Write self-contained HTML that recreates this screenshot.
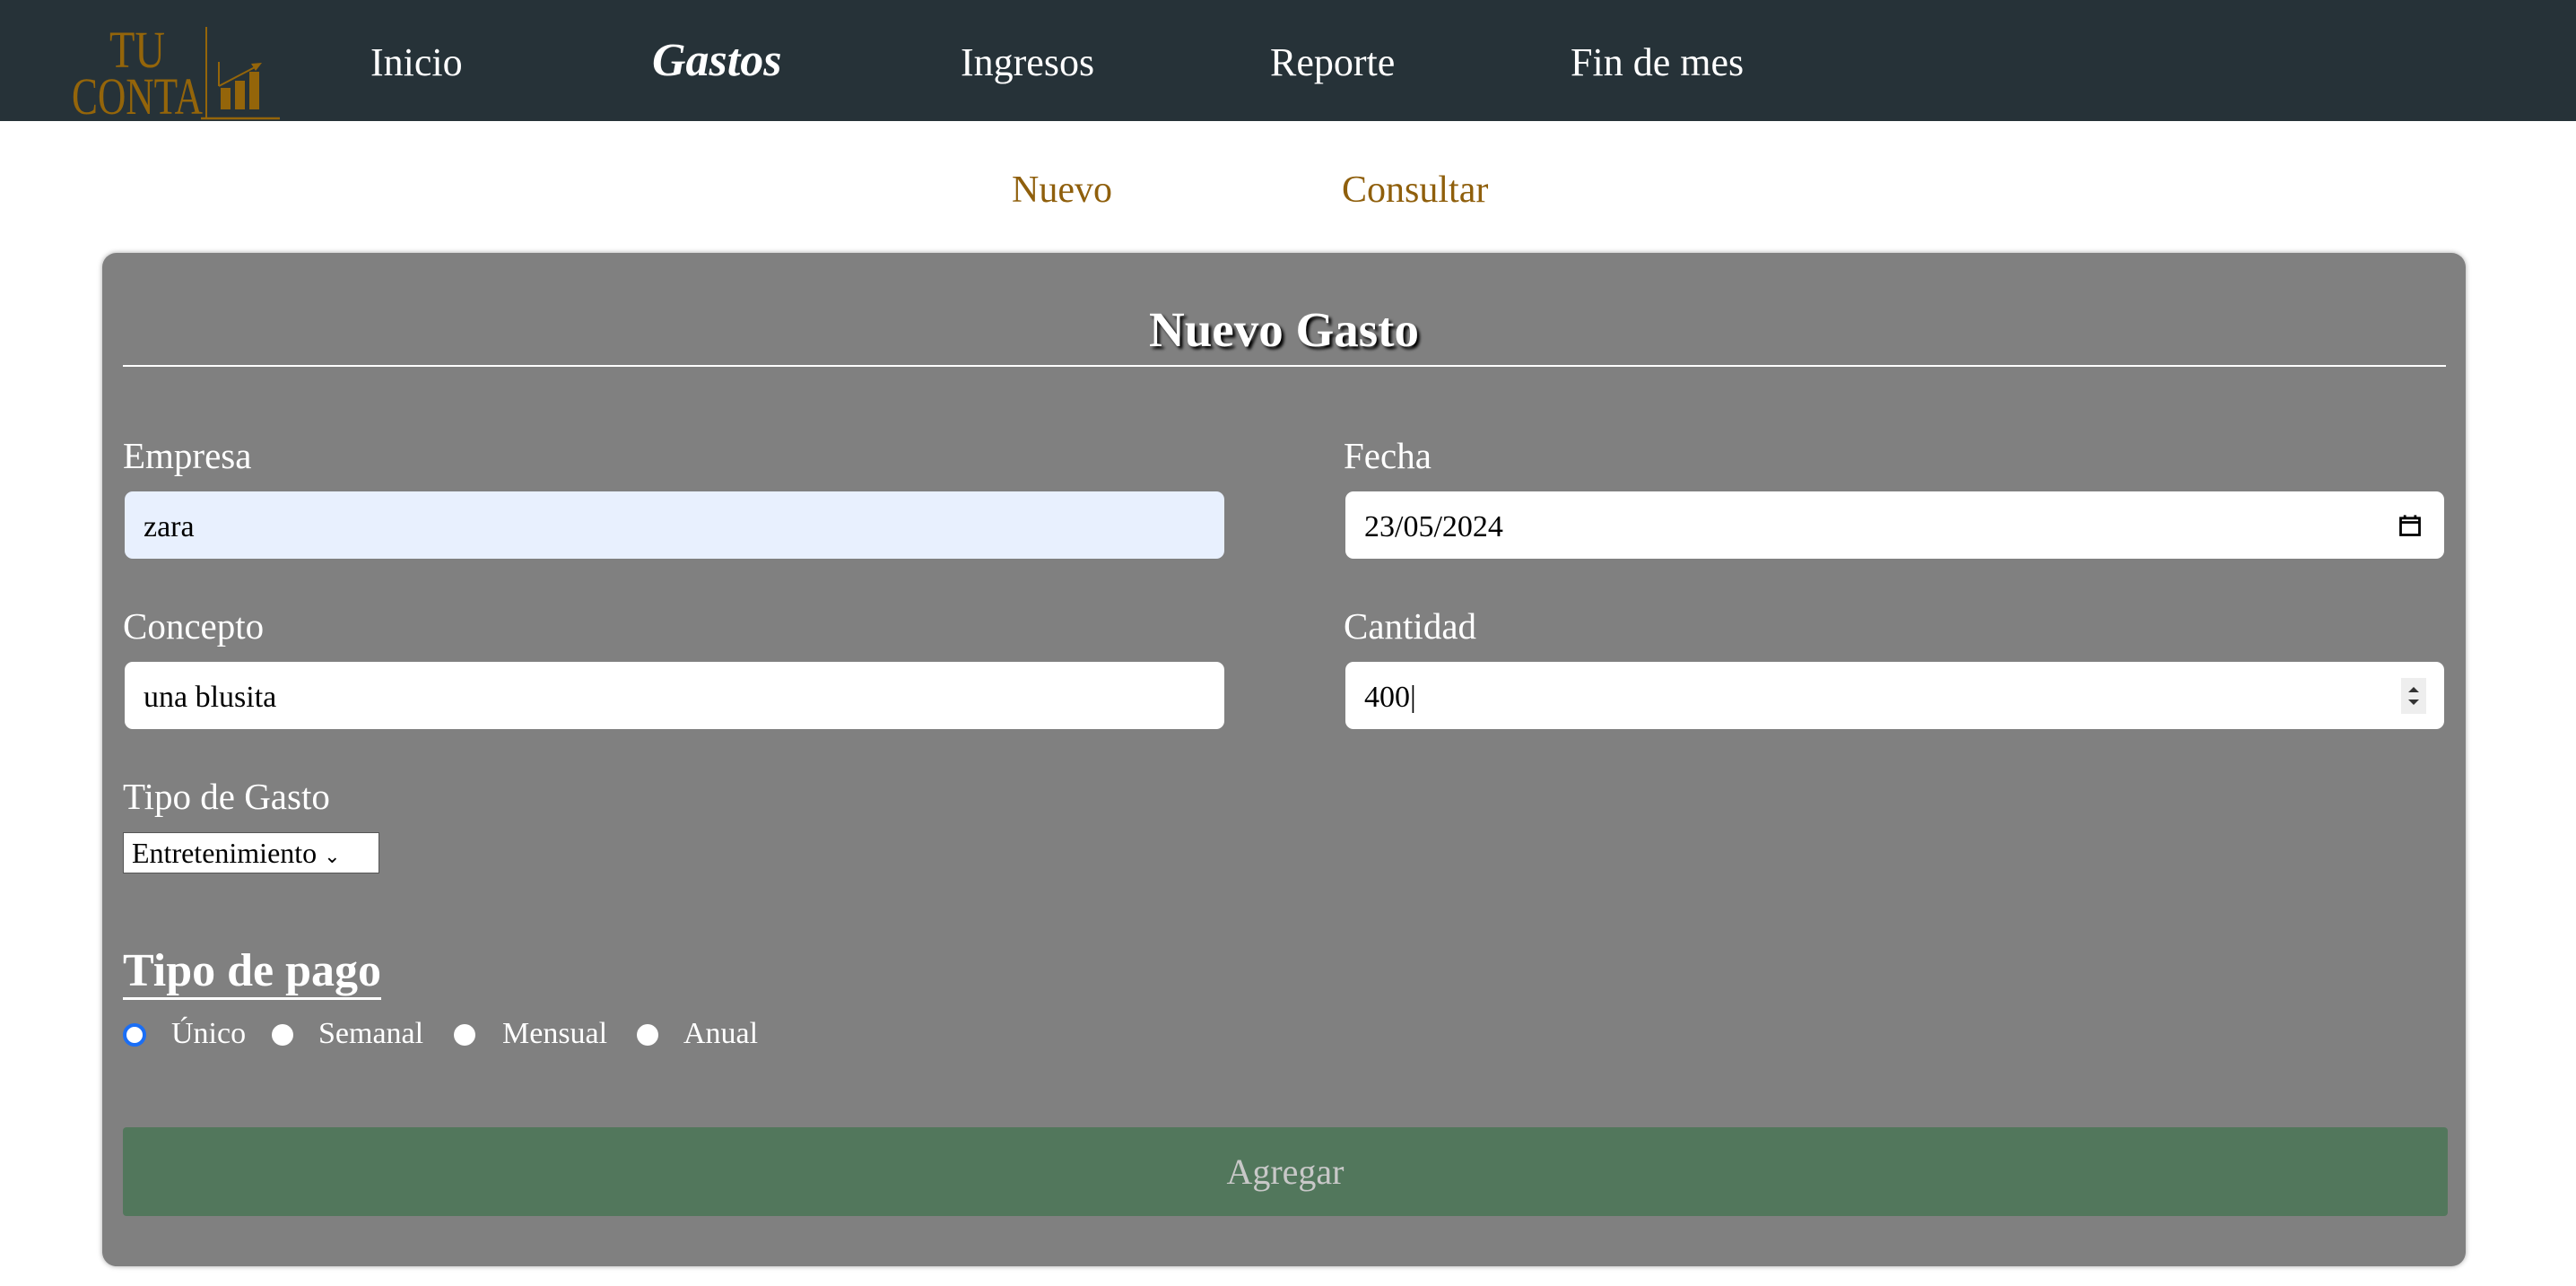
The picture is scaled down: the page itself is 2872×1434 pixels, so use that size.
<!DOCTYPE html>
<html><head><meta charset="utf-8"><style>
*{box-sizing:border-box;margin:0;padding:0}
body{width:2872px;height:1434px;background:#fff;font-family:"Liberation Serif",serif;position:relative;overflow:hidden}
.nav{position:absolute;left:0;top:0;width:2872px;height:135px;background:#263238}
.ni{position:absolute;color:#fff;font-size:44px;top:44px}
.sub{position:absolute;color:#8f5f0c;font-size:42px;top:188px}
.card{position:absolute;left:114px;top:282px;width:2635px;height:1130px;background:#808080;border-radius:16px;box-shadow:0 0 6px rgba(0,0,0,.35)}
.t{position:absolute;color:#fff}
.lbl{font-size:41px}
.in{position:absolute;height:75px;background:#fff;border-radius:9px;font-size:34px;color:#000;padding-left:21px;line-height:80px}
.r{position:absolute;width:24px;height:24px;border-radius:50%;background:#fff;top:1142px}
</style></head><body>
<div class="nav">
<svg style="position:absolute;left:0;top:0" width="340" height="135" viewBox="0 0 340 135">
<text x="122" y="75" font-family="Liberation Serif" font-size="58" fill="#94650a" textLength="62" lengthAdjust="spacingAndGlyphs">TU</text>
<text x="80" y="127" font-family="Liberation Serif" font-size="58" fill="#94650a" textLength="146" lengthAdjust="spacingAndGlyphs">CONTA</text>
<line x1="230" y1="30" x2="230" y2="132" stroke="#94650a" stroke-width="2"/>
<line x1="224" y1="132" x2="312" y2="132" stroke="#94650a" stroke-width="2.5"/>
<rect x="246" y="98" width="11" height="24" fill="#94650a"/>
<rect x="262" y="90" width="11" height="32" fill="#94650a"/>
<rect x="278" y="80" width="11" height="42" fill="#94650a"/>
<line x1="244" y1="96" x2="286" y2="74" stroke="#94650a" stroke-width="2"/>
<polygon points="292,70 280,71 285,79" fill="#94650a"/>
<line x1="244" y1="69" x2="244" y2="96" stroke="#94650a" stroke-width="2"/>
</svg>
<div class="ni" style="left:413px">Inicio</div>
<div class="ni" style="left:727px;font-weight:bold;font-style:italic;font-size:52px;top:38px">Gastos</div>
<div class="ni" style="left:1071px">Ingresos</div>
<div class="ni" style="left:1416px">Reporte</div>
<div class="ni" style="left:1751px">Fin de mes</div>
</div>
<div class="sub" style="left:1128px">Nuevo</div>
<div class="sub" style="left:1496px">Consultar</div>
<div class="card"></div>
<div class="t" style="left:114px;width:2635px;text-align:center;top:336px;font-size:55px;font-weight:bold;text-shadow:3px 3px 3px #000">Nuevo Gasto</div>
<div style="position:absolute;left:137px;top:407px;width:2590px;height:2px;background:#fff"></div>
<div class="t lbl" style="left:137px;top:484px">Empresa</div>
<div class="in" style="left:139px;top:548px;width:1226px;background:#e8f0fe">zara</div>
<div class="t lbl" style="left:1498px;top:484px">Fecha</div>
<div class="in" style="left:1500px;top:548px;width:1225px">23/05/2024
<svg style="position:absolute;right:24px;top:24px" width="28" height="28" viewBox="0 0 24 24"><path d="M3 5h18v16H3z M3 9h18" fill="none" stroke="#000" stroke-width="2.4"/><path d="M7 2v4M17 2v4" stroke="#000" stroke-width="2.4"/></svg></div>
<div class="t lbl" style="left:137px;top:674px">Concepto</div>
<div class="in" style="left:139px;top:738px;width:1226px">una blusita</div>
<div class="t lbl" style="left:1498px;top:674px">Cantidad</div>
<div class="in" style="left:1500px;top:738px;width:1225px">400|
<svg style="position:absolute;right:20px;top:18px" width="28" height="40" viewBox="0 0 14 20"><rect width="14" height="20" fill="#eee"/><path d="M4 8l3-3 3 3zM4 12l3 3 3-3z" fill="#333"/></svg></div>
<div class="t lbl" style="left:137px;top:864px">Tipo de Gasto</div>
<div style="position:absolute;left:137px;top:928px;width:286px;height:46px;background:#fff;border:1px solid #555;font-size:32px;line-height:44px;padding-left:9px">Entretenimiento <span style="font-size:22px">&#8964;</span></div>
<div class="t" style="left:137px;top:1054px;font-size:52px;font-weight:bold;border-bottom:3px solid #fff;line-height:58px">Tipo de pago</div>
<div class="r" style="left:137px;width:26px;height:26px;top:1141px;border:4px solid #1a6ef5;background:#fff"></div>
<div class="t" style="left:191px;top:1134px;font-size:34px">Único</div>
<div class="r" style="left:303px"></div>
<div class="t" style="left:355px;top:1134px;font-size:34px">Semanal</div>
<div class="r" style="left:506px"></div>
<div class="t" style="left:560px;top:1134px;font-size:34px">Mensual</div>
<div class="r" style="left:710px"></div>
<div class="t" style="left:762px;top:1134px;font-size:34px">Anual</div>
<div style="position:absolute;left:137px;top:1257px;width:2592px;height:99px;background:#52775c;border-radius:4px;color:#c8c8c8;font-size:40px;text-align:center;line-height:99px">Agregar</div>
</body></html>
